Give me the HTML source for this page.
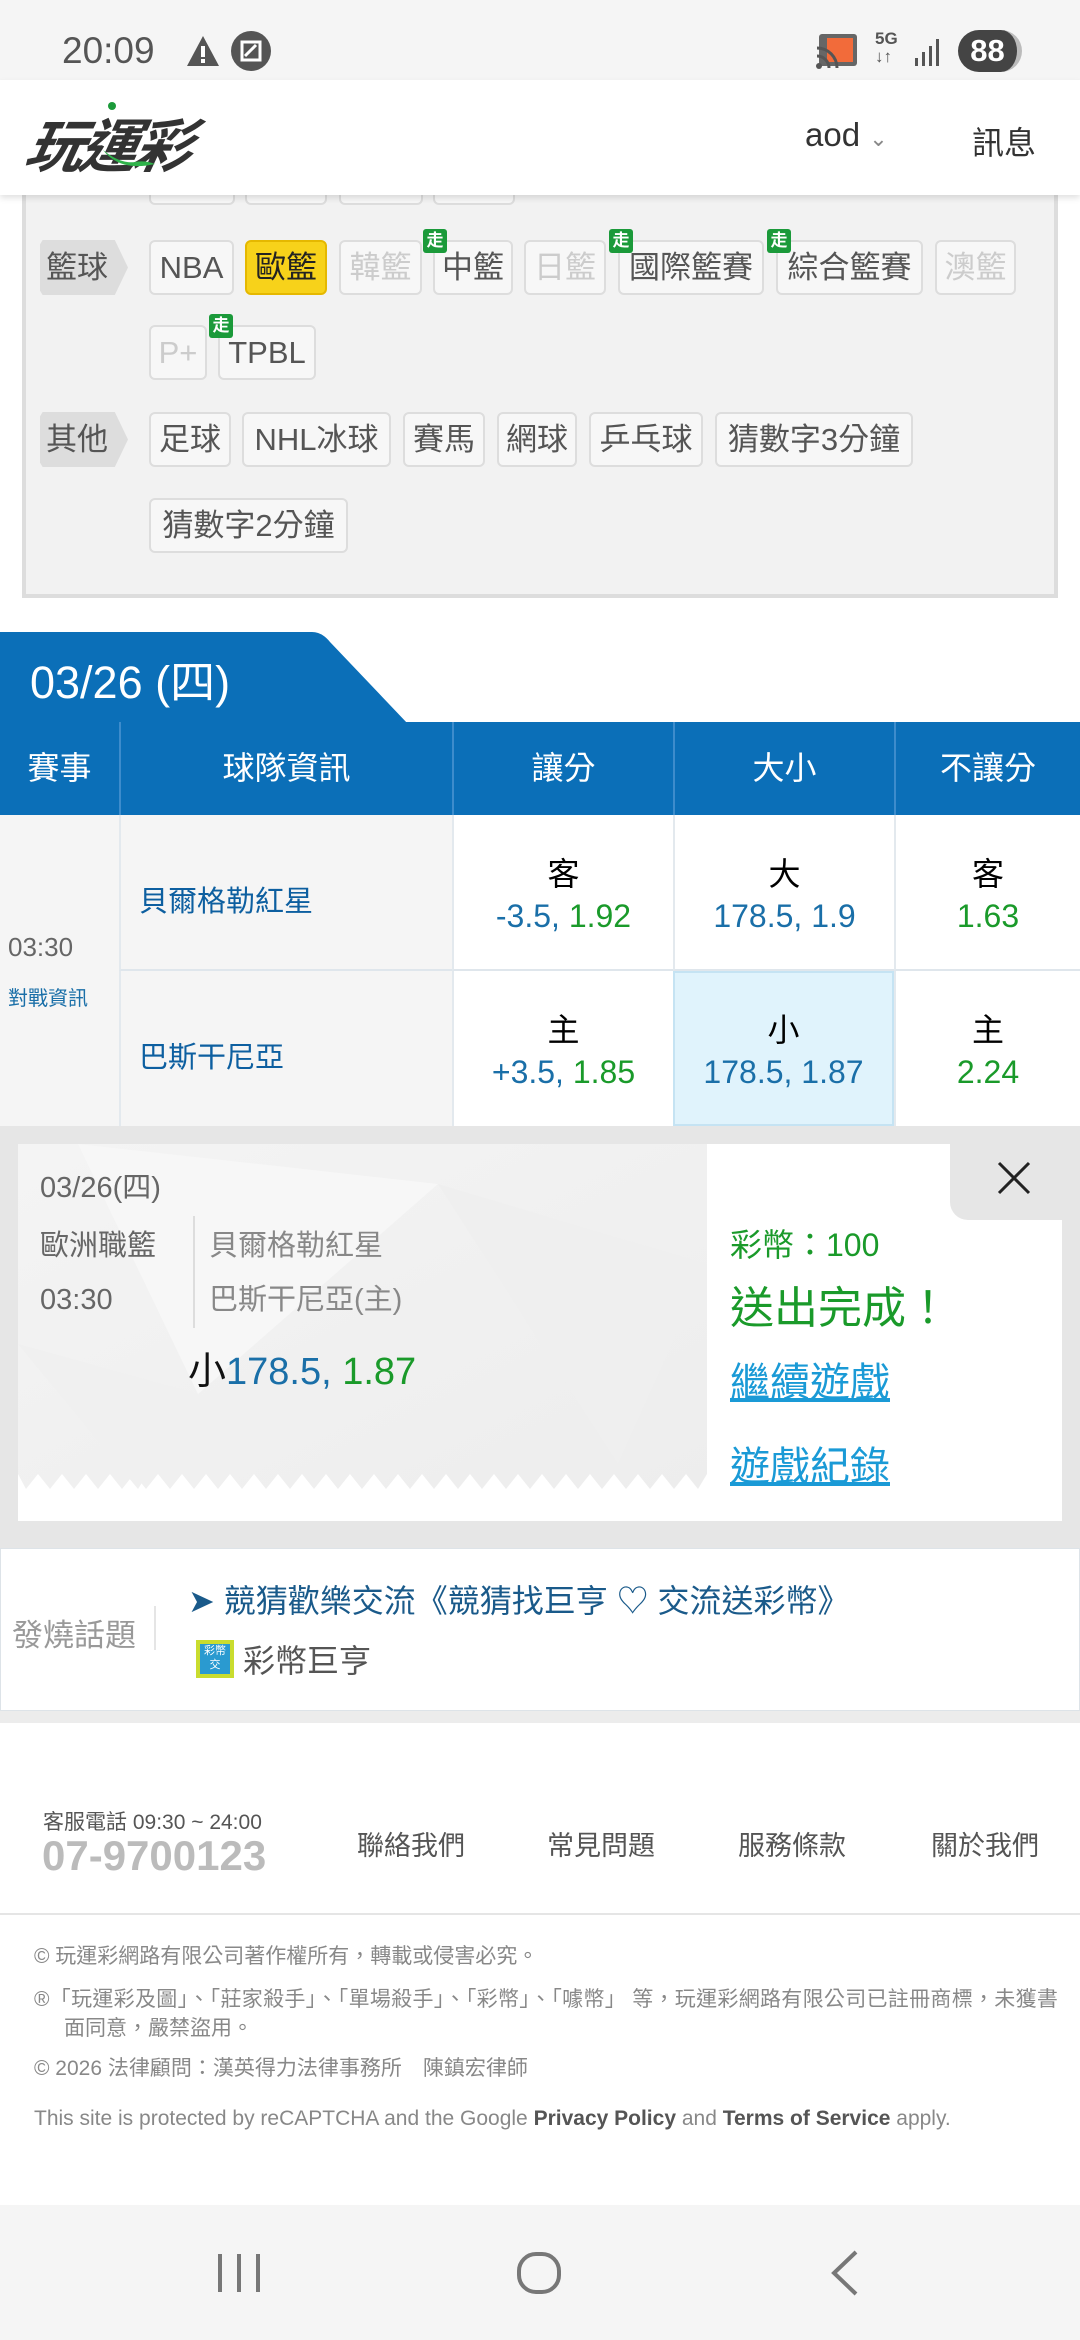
<!DOCTYPE html>
<html><head><meta charset="utf-8">
<style>
*{margin:0;padding:0;box-sizing:border-box}
body{width:1080px;height:2340px;position:relative;background:#fff;font-family:"Liberation Sans","Noto Sans CJK TC",sans-serif;overflow:hidden}
.a{position:absolute;white-space:nowrap}
.tag{position:absolute;height:55px;border:2px solid #ddd;border-radius:6px;background:#f7f7f7;font-size:31px;color:#555;line-height:51px;text-align:center}
.dim{color:#ccc}
.lab{position:absolute;left:40px;width:88px;height:55px;background:#ddd;color:#555;font-size:31px;line-height:55px;padding-left:6px;clip-path:polygon(0 8%,3% 0,85% 0,100% 50%,85% 100%,3% 100%,0 92%)}
.zou{position:absolute;width:24px;height:24px;background:#1b9a3a;color:#fff;font-size:17px;line-height:24px;text-align:center;border-radius:3px;font-weight:bold}
.th{position:absolute;top:722px;height:93px;color:#fff;font-size:32px;line-height:93px;text-align:center;border-left:2px solid #3d8ccc}
.cell{position:absolute;text-align:center;font-size:32px;line-height:42px;border-left:2px solid #e3e9ee;border-bottom:2px solid #dfe6ec}
.bl{color:#1a6fa8}.gr{color:#1a9a2a}
.ft{font-size:27px;color:#555}
.cp{font-size:21px;color:#888;left:34px}
</style></head><body>
<div class="a" style="left:0;top:0;width:1080px;height:80px;background:#f5f5f5"></div>
<div class="a" style="left:62px;top:30px;font-size:37px;color:#555">20:09</div>
<svg class="a" style="left:185px;top:34px" width="36" height="34"><path d="M18 2 L34 32 L2 32 Z" fill="#555"/><rect x="16" y="12" width="4" height="11" fill="#fff"/><rect x="16" y="25" width="4" height="4" fill="#fff"/></svg>
<svg class="a" style="left:230px;top:30px" width="42" height="42"><circle cx="21" cy="21" r="20" fill="#555"/><rect x="12" y="12" width="18" height="18" fill="none" stroke="#fff" stroke-width="3"/><path d="M15 26 L26 15" stroke="#fff" stroke-width="3"/></svg>
<svg class="a" style="left:815px;top:32px" width="44" height="38"><rect x="4" y="2" width="38" height="32" rx="3" fill="#666"/><rect x="12" y="6" width="26" height="24" fill="#f26b3a"/><path d="M2 16 A20 20 0 0 1 22 36 M2 24 A12 12 0 0 1 14 36" stroke="#555" stroke-width="3" fill="none"/><circle cx="4" cy="34" r="3" fill="#555"/></svg>
<div class="a" style="left:875px;top:30px;font-size:17px;color:#555;line-height:18px;font-weight:bold">5G<br>↓↑</div>
<svg class="a" style="left:913px;top:36px" width="32" height="30"><rect x="2" y="22" width="3" height="8" fill="#555"/><rect x="9" y="16" width="3" height="14" fill="#555"/><rect x="16" y="10" width="3" height="20" fill="#555"/><rect x="23" y="3" width="3" height="27" fill="#555"/></svg>
<div class="a" style="left:958px;top:30px;width:64px;height:42px;border-radius:21px;background:#444;color:#fff;font-size:31px;font-weight:bold;line-height:42px;text-align:center;border-right:5px solid #bbb">88</div>
<div class="a" style="left:0;top:80px;width:1080px;height:115px;background:#fff;box-shadow:0 3px 6px rgba(0,0,0,.12);z-index:3">
 <div class="a" style="left:28px;top:20px;font-size:58px;font-weight:bold;font-style:italic;color:#333;letter-spacing:-4px;transform:skewX(-12deg)">玩運彩</div>
 <svg class="a" style="left:95px;top:22px" width="70" height="70"><circle cx="17" cy="4" r="4" fill="#1b9a3a"/><path d="M8 48 Q25 70 60 62 Q50 58 40 60 Q25 62 8 48Z" fill="#2fb34a"/></svg>
 <div class="a" style="left:805px;top:36px;font-size:33px;color:#333">aod <span style="font-size:22px;color:#888">⌄</span></div>
 <div class="a" style="left:972px;top:38px;font-size:32px;color:#333">訊息</div>
</div>
<div class="a" style="left:22px;top:180px;width:1036px;height:418px;background:#f2f2f2;border:4px solid #ddd;border-top:none"></div>
<div class="tag" style="left:149px;top:150px;width:86px"></div><div class="tag" style="left:245px;top:150px;width:82px"></div><div class="tag" style="left:339px;top:150px;width:84px"></div><div class="tag" style="left:433px;top:150px;width:82px"></div>
<div class="lab" style="top:240px">籃球</div>
<div class="tag" style="left:149px;top:240px;width:85px">NBA</div>
<div class="tag" style="left:245px;top:240px;width:82px;background:#f7d21a;border-color:#e5b800;color:#222">歐籃</div>
<div class="tag dim" style="left:339px;top:240px;width:83px">韓籃</div>
<div class="tag" style="left:433px;top:240px;width:80px">中籃</div><div class="zou" style="left:423px;top:229px">走</div>
<div class="tag dim" style="left:524px;top:240px;width:82px">日籃</div>
<div class="tag" style="left:618px;top:240px;width:146px">國際籃賽</div><div class="zou" style="left:609px;top:229px">走</div>
<div class="tag" style="left:776px;top:240px;width:147px">綜合籃賽</div><div class="zou" style="left:767px;top:229px">走</div>
<div class="tag dim" style="left:935px;top:240px;width:81px">澳籃</div>
<div class="tag dim" style="left:149px;top:325px;width:58px">P+</div>
<div class="tag" style="left:218px;top:325px;width:98px">TPBL</div><div class="zou" style="left:209px;top:314px">走</div>
<div class="lab" style="top:412px">其他</div>
<div class="tag" style="left:149px;top:412px;width:82px">足球</div>
<div class="tag" style="left:242px;top:412px;width:149px">NHL冰球</div>
<div class="tag" style="left:403px;top:412px;width:82px">賽馬</div>
<div class="tag" style="left:497px;top:412px;width:80px">網球</div>
<div class="tag" style="left:589px;top:412px;width:114px">乒乓球</div>
<div class="tag" style="left:715px;top:412px;width:198px">猜數字3分鐘</div>
<div class="tag" style="left:149px;top:498px;width:199px">猜數字2分鐘</div>
<svg class="a" style="left:0;top:632px" width="1080" height="92"><path d="M0 0 H312 Q322 0 330 10 L408 92 H0Z" fill="#0b6fb8"/></svg>
<div class="a" style="left:30px;top:646px;font-size:45px;color:#fff">03/26 (四)</div>
<div class="a" style="left:0;top:722px;width:1080px;height:93px;background:#0b6fb8"></div>
<div class="th" style="left:0;width:119px;border-left:none">賽事</div>
<div class="th" style="left:119px;width:333px">球隊資訊</div>
<div class="th" style="left:452px;width:221px">讓分</div>
<div class="th" style="left:673px;width:221px">大小</div>
<div class="th" style="left:894px;width:186px">不讓分</div>
<div class="a" style="left:0;top:815px;width:119px;height:311px;background:#f5f5f5"></div>
<div class="a" style="left:8px;top:932px;font-size:26px;color:#666">03:30</div>
<div class="a" style="left:8px;top:982px;font-size:20px;color:#1a6fa8">對戰資訊</div>
<div class="a" style="left:119px;top:815px;width:333px;height:156px;background:#f5f5f5;border-left:2px solid #e3e9ee;border-bottom:2px solid #dfe6ec"></div>
<div class="a" style="left:119px;top:971px;width:333px;height:155px;background:#f5f5f5;border-left:2px solid #e3e9ee"></div>
<div class="a" style="left:139px;top:878px;font-size:29px;color:#0d5fa0">貝爾格勒紅星</div>
<div class="a" style="left:139px;top:1034px;font-size:29px;color:#0d5fa0">巴斯干尼亞</div>
<div class="cell" style="left:452px;top:815px;width:221px;height:156px;padding-top:38px">客<br><span class="bl">-3.5, </span><span class="gr">1.92</span></div>
<div class="cell" style="left:673px;top:815px;width:221px;height:156px;padding-top:38px">大<br><span class="bl">178.5, 1.9</span></div>
<div class="cell" style="left:894px;top:815px;width:186px;height:156px;padding-top:38px">客<br><span class="gr">1.63</span></div>
<div class="cell" style="left:452px;top:971px;width:221px;height:155px;padding-top:38px;border-bottom:none">主<br><span class="bl">+3.5, </span><span class="gr">1.85</span></div>
<div class="cell" style="left:673px;top:971px;width:221px;height:155px;padding-top:36px;background:#e0f3fc;border:2px solid #c5e3f3">小<br><span class="bl">178.5, </span><span class="bl">1.87</span></div>
<div class="cell" style="left:894px;top:971px;width:186px;height:155px;padding-top:38px;border-bottom:none">主<br><span class="gr">2.24</span></div>
<div class="a" style="left:0;top:1126px;width:1080px;height:422px;background:#e6e6e6"></div>
<div class="a" style="left:18px;top:1144px;width:1044px;height:377px;background:#fff"></div>
<svg class="a" style="left:18px;top:1144px" width="689" height="350"><defs><linearGradient id="g" x1="0" y1="0" x2="1" y2="1"><stop offset="0" stop-color="#f4f4f4"/><stop offset="1" stop-color="#ededed"/></linearGradient></defs>
<path d="M0 0 H689 V330 L680 345 L668 330 L656 345 L644 330 L632 345 L620 330 L608 345 L596 330 L584 345 L572 330 L560 345 L548 330 L536 345 L524 330 L512 345 L500 330 L488 345 L476 330 L464 345 L452 330 L440 345 L428 330 L416 345 L404 330 L392 345 L380 330 L368 345 L356 330 L344 345 L332 330 L320 345 L308 330 L296 345 L284 330 L272 345 L260 330 L248 345 L236 330 L224 345 L212 330 L200 345 L188 330 L176 345 L164 330 L152 345 L140 330 L128 345 L116 330 L104 345 L92 330 L80 345 L68 330 L56 345 L44 330 L32 345 L20 330 L8 345 L0 330Z" fill="url(#g)"/>
<path d="M60 0 L180 250 L420 40 Z" fill="#f7f7f7"/><path d="M420 40 L600 320 L689 120Z" fill="#efefef"/><path d="M0 200 L180 250 L120 345Z" fill="#f0f0f0"/></svg>
<div class="a" style="left:40px;top:1164px;font-size:29px;color:#666">03/26(四)</div>
<div class="a" style="left:40px;top:1222px;font-size:29px;color:#666">歐洲職籃</div>
<div class="a" style="left:40px;top:1284px;font-size:29px;color:#666">03:30</div>
<div class="a" style="left:193px;top:1216px;width:2px;height:112px;background:#ddd"></div>
<div class="a" style="left:209px;top:1222px;font-size:29px;color:#888">貝爾格勒紅星</div>
<div class="a" style="left:209px;top:1276px;font-size:29px;color:#888">巴斯干尼亞(主)</div>
<div class="a" style="left:188px;top:1340px;font-size:38px;color:#111">小<span class="bl">178.5, </span><span class="gr">1.87</span></div>
<div class="a" style="left:950px;top:1144px;width:112px;height:76px;background:#e6e6e6;border-bottom-left-radius:18px"></div>
<svg class="a" style="left:996px;top:1160px" width="36" height="36"><path d="M3 3 L33 33 M33 3 L3 33" stroke="#222" stroke-width="3"/></svg>
<div class="a" style="left:730px;top:1220px;font-size:32px;color:#1a9a2a">彩幣：100</div>
<div class="a" style="left:730px;top:1272px;font-size:44px;color:#1a9a2a">送出完成！</div>
<div class="a" style="left:730px;top:1350px;font-size:40px;color:#1a9ad6;text-decoration:underline">繼續遊戲</div>
<div class="a" style="left:730px;top:1434px;font-size:40px;color:#1a9ad6;text-decoration:underline">遊戲紀錄</div>
<div class="a" style="left:0;top:1548px;width:1080px;height:163px;background:#fff;border:1px solid #dde3e8"></div>
<div class="a" style="left:12px;top:1610px;font-size:31px;color:#999">發燒話題</div>
<div class="a" style="left:154px;top:1606px;width:2px;height:44px;background:#e5e5e5"></div>
<div class="a" style="left:188px;top:1576px;font-size:32px;color:#1a5a8a">➤ 競猜歡樂交流《競猜找巨亨 ♡ 交流送彩幣》</div>
<div class="a" style="left:196px;top:1640px;width:38px;height:38px;background:#c9dc2e"><div style="margin:4px;width:30px;height:30px;background:#2a9ad0;font-size:11px;color:#fff;line-height:14px;text-align:center">彩幣<br>交</div></div>
<div class="a" style="left:243px;top:1636px;font-size:32px;color:#555">彩幣巨亨</div>
<div class="a" style="left:0;top:1711px;width:1080px;height:12px;background:#ececec"></div>
<div class="a" style="left:43px;top:1806px;font-size:21px;color:#555">客服電話 09:30 ~ 24:00</div>
<div class="a" style="left:42px;top:1832px;font-size:42px;color:#bbb;font-weight:bold">07-9700123</div>
<div class="a ft" style="left:357px;top:1824px">聯絡我們</div>
<div class="a ft" style="left:547px;top:1824px">常見問題</div>
<div class="a ft" style="left:738px;top:1824px">服務條款</div>
<div class="a ft" style="left:931px;top:1824px">關於我們</div>
<div class="a" style="left:0;top:1913px;width:1080px;height:2px;background:#e5e5e5"></div>
<div class="a cp" style="top:1940px">© 玩運彩網路有限公司著作權所有，轉載或侵害必究。</div>
<div class="a cp" style="top:1983px;letter-spacing:0.3px">®「玩運彩及圖」、「莊家殺手」、「單場殺手」、「彩幣」、「噱幣」 等，玩運彩網路有限公司已註冊商標，未獲書</div>
<div class="a cp" style="top:2012px;left:64px">面同意，嚴禁盜用。</div>
<div class="a cp" style="top:2052px">© 2026 法律顧問：漢英得力法律事務所　陳鎮宏律師</div>
<div class="a cp" style="top:2107px">This site is protected by reCAPTCHA and the Google <b style="color:#555">Privacy Policy</b> and <b style="color:#555">Terms of Service</b> apply.</div>
<div class="a" style="left:0;top:2205px;width:1080px;height:135px;background:#f5f5f5"></div>
<svg class="a" style="left:215px;top:2250px" width="50" height="46"><path d="M5 4 V42 M24 4 V42 M43 4 V42" stroke="#777" stroke-width="4"/></svg>
<svg class="a" style="left:515px;top:2250px" width="50" height="46"><rect x="4" y="4" width="40" height="38" rx="17" fill="none" stroke="#777" stroke-width="4"/></svg>
<svg class="a" style="left:826px;top:2248px" width="36" height="50"><path d="M30 4 L8 25 L30 46" stroke="#777" stroke-width="4" fill="none"/></svg>
</body></html>
